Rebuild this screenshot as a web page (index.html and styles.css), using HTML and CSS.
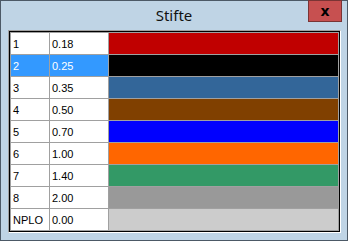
FILE: index.html
```html
<!DOCTYPE html>
<html>
  <head>
    <title>Stifte</title>
    <link rel="stylesheet" href="styles.css">
  </head>
  <body>
    <div class="window">
      <div class="titlebar">
        <span class="spacer"></span>
        <span class="title">Stifte</span>
        <button class="close">x</button>
      </div>

      <div class="frame">
        <div class="pens">
          <div class="cell">1</div><div class="cell">0.18</div><div class="swatch" style="background:#c00000"></div>
          <div class="cell sel">2</div><div class="cell sel">0.25</div><div class="swatch" style="background:#000000"></div>
          <div class="cell">3</div><div class="cell">0.35</div><div class="swatch" style="background:#336699"></div>
          <div class="cell">4</div><div class="cell">0.50</div><div class="swatch" style="background:#804000"></div>
          <div class="cell">5</div><div class="cell">0.70</div><div class="swatch" style="background:#0000ff"></div>
          <div class="cell">6</div><div class="cell">1.00</div><div class="swatch" style="background:#ff6600"></div>
          <div class="cell">7</div><div class="cell">1.40</div><div class="swatch" style="background:#339966"></div>
          <div class="cell">8</div><div class="cell">2.00</div><div class="swatch" style="background:#999999"></div>
          <div class="cell">NPLO</div><div class="cell">0.00</div><div class="swatch" style="background:#cccccc"></div>
        </div>
      </div>
    </div>
  </body>
</html>
```

FILE: styles.css
```css
body { margin: 0; font-family: "Liberation Sans", Arial, sans-serif; }

.window { width: 348px; height: 241px; box-sizing: border-box; border: 1px solid #4c5966; background: #bfd4e5; }

.titlebar { height: 29px; display: grid; grid-template-columns: 39px 1fr 39px; }
.title { text-align: center; font-family: "Noto Sans", "Open Sans", sans-serif; font-size: 15px; line-height: 28px; color: #111; }
.close { margin-top: -1px; width: 34px; height: 22px; padding: 0; border: 1px solid #7a3434; background: #c75050; color: #000; font-family: "DejaVu Sans", sans-serif; font-weight: bold; font-size: 14px; line-height: 16px; }

.frame { margin: 0 6px 0 7px; border-style: solid; border-width: 1px; border-color: #a0a0a0 #fff #fff #a0a0a0; }
.pens { border: 1px solid #000; display: grid; grid-template-columns: 38px 58px 229px; grid-auto-rows: 21px; gap: 1px; padding: 1px; background: #a0a0a0; }

.cell { background: #fff; font-size: 11px; line-height: 21px; padding: 1px 0 0 2px; box-sizing: border-box; color: #000; }
.cell.sel { background: #3399ff; color: #fff; }
.swatch { }
```
